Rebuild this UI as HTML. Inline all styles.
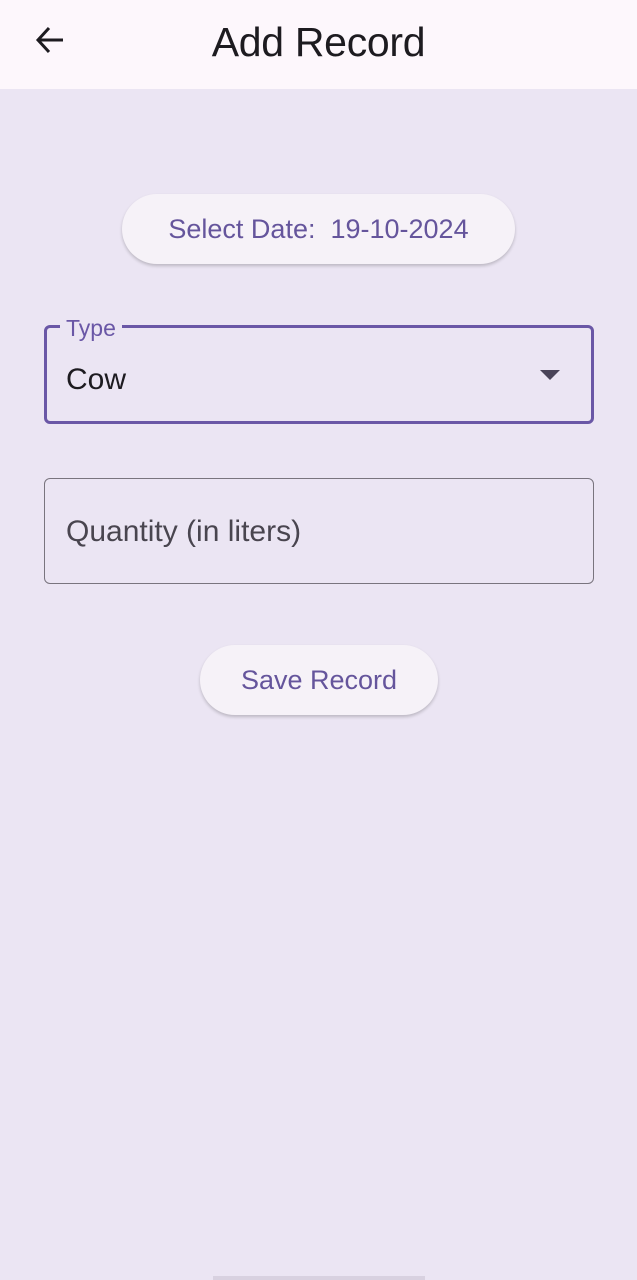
<!DOCTYPE html>
<html><head><style>
*{margin:0;padding:0;box-sizing:border-box}
body{width:637px;height:1280px;background:#ebe5f3;font-family:"Liberation Sans",sans-serif;position:relative;overflow:hidden}
.top{position:absolute;left:0;top:0;width:637px;height:89px;background:#fdf7fc}
.title{position:absolute;left:0;width:637px;top:19px;text-align:center;font-size:41px;color:#1d1b20;letter-spacing:-0.3px}
.btn{position:absolute;background:#f6f2f8;border-radius:40px;box-shadow:0 2px 3px rgba(0,0,0,0.2);color:#65559c;text-align:center;font-size:27px}
.field{position:absolute;border-radius:6px}
</style></head><body>
<div class="top"></div>
<svg style="position:absolute;left:34px;top:25px" width="32" height="30" viewBox="0 0 32 30"><path d="M4 15H29M15 3L4 15L15 27" fill="none" stroke="#1d1b20" stroke-width="3"/></svg>
<div class="title">Add Record</div>
<div class="btn" style="left:122px;top:194px;width:393px;height:70px;line-height:70px">Select Date:&nbsp; 19-10-2024</div>
<div class="field" style="left:44px;top:325px;width:550px;height:99px;border:3px solid #6a57a6"></div>
<div style="position:absolute;left:60px;top:315px;background:#ebe5f3;padding:0 6px;font-size:23px;color:#6a57a6">Type</div>
<div style="position:absolute;left:66px;top:363px;font-size:30px;color:#1d1b20">Cow</div>
<svg style="position:absolute;left:540px;top:370px" width="20" height="12"><path d="M0 0H20L10 10Z" fill="#4a4458"/></svg>
<div class="field" style="left:44px;top:478px;width:550px;height:106px;border:1.5px solid #79747e"></div>
<div style="position:absolute;left:66px;top:515px;font-size:30px;color:#49454f">Quantity (in liters)</div>
<div class="btn" style="left:200px;top:645px;width:238px;height:70px;line-height:70px">Save Record</div>
<div style="position:absolute;left:213px;top:1276px;width:212px;height:4px;background:#d8d1e0"></div>
</body></html>
